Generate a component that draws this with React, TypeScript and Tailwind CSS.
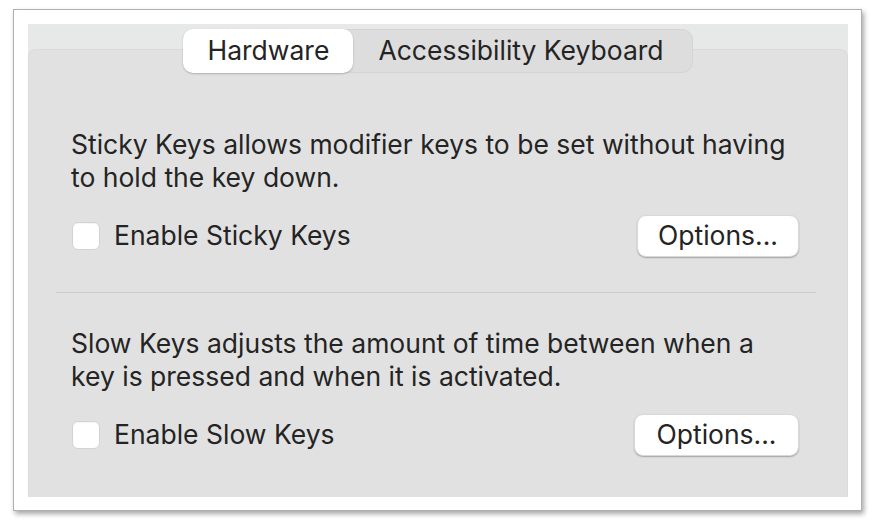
import React from 'react';

const FONT = { fontFamily: 'Inter, "Liberation Sans", Arial, sans-serif' };

function Checkbox() {
  return (
    <div className="w-[28px] h-[28px] rounded-[6px] bg-white border border-[#d3d3d3] shadow-[inset_0_1px_1px_rgba(0,0,0,0.04)]" />
  );
}

function OptionsButton({ wide }: { wide?: boolean }) {
  return (
    <button
      type="button"
      className={`${wide ? 'w-[165px]' : 'w-[162px]'} h-[42px] rounded-[9px] bg-white text-[26.5px] text-[#242424] shadow-[0_1px_1.5px_rgba(0,0,0,0.28)] border-[0.5px] border-[#d8d8d8]`}
    >
      Options...
    </button>
  );
}

function Section({ text, label, wide }: { text: React.ReactNode; label: string; wide?: boolean }) {
  return (
    <div className="pl-[42px] pr-[48px]">
      <p className="text-[26.5px] leading-[33px] text-[#242424]">{text}</p>
      <div className="mt-[21px] flex items-center justify-between h-[42px]">
        <div className="flex items-center gap-[14px] pl-[1px]">
          <Checkbox />
          <span className="text-[26.5px] text-[#242424]">{label}</span>
        </div>
        <OptionsButton wide={wide} />
      </div>
    </div>
  );
}

export default function App() {
  return (
    <div className="w-[872px] h-[527px] bg-white pt-[9px] pl-[13px]" style={FONT}>
      <div className="w-[849px] h-[502px] border border-[#b0b0b0] bg-white shadow-[2px_3px_5px_rgba(0,0,0,0.35)] pt-[14px] pl-[14px] pr-[13px] pb-[13px]">
        <div className="h-full bg-[#e7e8e8] pt-[5px] flex flex-col">
          <div className="relative z-10 -mb-[24px] flex justify-center">
            <div className="flex h-[44px] rounded-[11px] bg-[#dddddd] border border-[#d4d4d4]">
              <div className="w-[170px] -m-px h-[44px] rounded-[10px] bg-white shadow-[0_1px_2px_rgba(0,0,0,0.22)] flex items-center justify-center text-[26.5px] text-[#242424]">
                Hardware
              </div>
              <div className="pl-[26px] pr-[28px] flex items-center text-[26.5px] text-[#242424]">
                Accessibility Keyboard
              </div>
            </div>
          </div>
          <div className="flex-1 bg-[#e1e1e1] rounded-t-[8px] border-t border-x border-[#dadada] pt-[78px]">
            <Section
              text={<>Sticky Keys allows modifier keys to be set without having<br />to hold the key down.</>}
              label="Enable Sticky Keys"
            />
            <div className="ml-[27px] mr-[31px] mt-[35px] mb-[34px] h-px bg-[#cbcbcb]" />
            <Section
              text={<>Slow Keys adjusts the amount of time between when a<br />key is pressed and when it is activated.</>}
              label="Enable Slow Keys"
              wide
            />
          </div>
        </div>
      </div>
    </div>
  );
}
